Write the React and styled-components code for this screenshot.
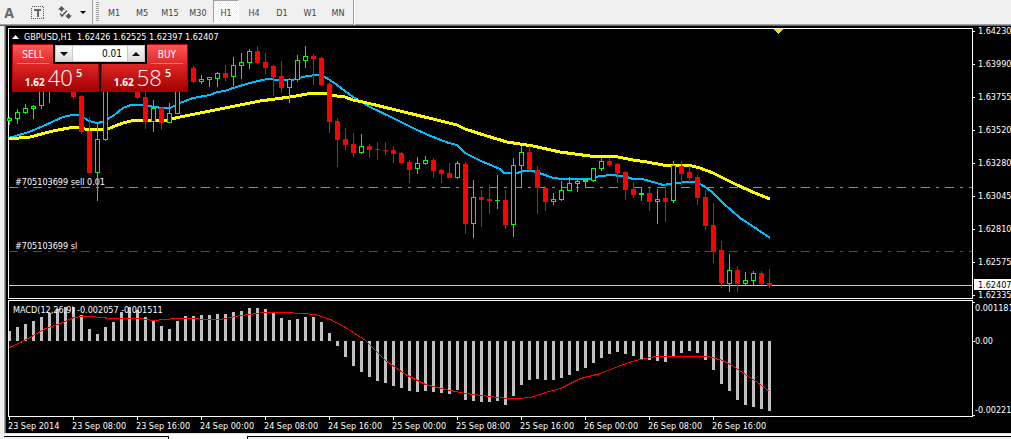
import React, { useState } from "react";
import styled, { createGlobalStyle, css } from "styled-components";

const GlobalStyle = createGlobalStyle`
  * {
    box-sizing: border-box;
  }

  body {
    margin: 0;
    background: #f0f0f0;
    font-family: "DejaVu Sans Condensed", "DejaVu Sans", sans-serif;
    font-size: 9px;
    overflow: hidden;
  }

  button,
  input {
    font-family: inherit;
    margin: 0;
    padding: 0;
  }
`;

const Page = styled.div`
  display: flex;
  flex-direction: column;
  min-height: 100vh;
`;

const Toolbar = styled.div`
  display: flex;
  height: 26px;
  background: #f0f0f0;
  border-bottom: 1px solid #696969;
  box-shadow: inset 0 -1px 0 #a0a0a0;
`;

const DrawTools = styled.div`
  display: flex;
  align-items: center;
  width: 93px;
  border-right: 1px solid #a0a0a0;
`;

const ToolButton = styled.button`
  display: flex;
  align-items: center;
  justify-content: center;
  width: ${({ $width }) => $width}px;
  height: 24px;
  border: none;
  background: none;
  color: #6b6b6b;
  font-size: 14px;
  font-weight: bold;
`;

const Grip = styled.span`
  width: 3px;
  height: 19px;
  margin: 2px 2px 0 3px;
  background: repeating-linear-gradient(#a0a0a0 0 1px, #f0f0f0 1px 2px);
`;

const Periods = styled.div`
  display: flex;
  gap: 2px;
  padding-right: 2px;
  border-right: 1px solid #a0a0a0;
  box-shadow: 1px 0 0 #ffffff;
`;

const PeriodButton = styled.button`
  width: 26px;
  height: 23px;
  padding-top: 2px;
  border: 1px solid transparent;
  background: none;
  color: #444444;
  font-size: 9px;

  ${({ $active }) =>
    $active &&
    css`
      border-color: #a0a0a0 #ffffff #ffffff #a0a0a0;
      background: repeating-conic-gradient(#ffffff 0 25%, #f0f0f0 0 50%) 0 0 /
        2px 2px;
    `}
`;

const Workspace = styled.div`
  display: grid;
  grid-template-columns: 1fr 38px;
  row-gap: 1px;
  margin-left: 4px;
  padding: 2px 0 0 3px;
  border-left: 1px solid #a0a0a0;
  box-shadow: inset 1px 0 0 #696969;
  background: #000000;
`;

const Pane = styled.div`
  position: relative;
  border: 1px solid #ffffff;
`;

const Drawing = styled.svg`
  display: block;
  width: 100%;
  height: ${({ $height }) => $height}px;
  overflow: ${({ $spill }) => ($spill ? "visible" : "hidden")};

  text {
    fill: #ffffff;
    font-size: 9px;
  }

  text.current {
    fill: #000000;
  }
`;

const Title = styled.div`
  position: absolute;
  top: 2px;
  left: 3px;
  display: flex;
  align-items: center;
  gap: 5px;
  color: #ffffff;
  line-height: 12px;
  white-space: pre;
`;

const TradePanel = styled.div`
  position: absolute;
  top: 15px;
  left: 3px;
  display: grid;
  grid-template-columns: 87px 87px;
  gap: 2px;
  background: #000000;
`;

const TradeButton = styled.button`
  display: flex;
  flex-direction: column;
  align-items: ${({ $side }) => ($side === "buy" ? "flex-end" : "flex-start")};
  height: 48px;
  border: 1px solid #b00000;
  background: linear-gradient(#ff5656, #dc2424 45%, #a40000);
  color: #ffffff;
`;

const TradeLabel = styled.span`
  width: 32px;
  height: 19px;
  margin: 0 4px;
  border-bottom: 1px solid #f08080;
  font-size: 10px;
  line-height: 19px;
  text-align: center;
`;

const Quote = styled.span`
  display: flex;
  align-items: baseline;
  align-self: center;
  gap: 3px;
  height: 26px;
  padding-right: 4px;
  font-family: "Open Sans", sans-serif;
  line-height: 26px;
`;

const QuoteBase = styled.span`
  font-size: 10px;
  font-weight: bold;
`;

const QuotePips = styled.span`
  font-size: 22px;
  font-weight: 300;
`;

const QuotePoint = styled.sup`
  align-self: flex-start;
  font-size: 11px;
  font-weight: 600;
  line-height: 18px;
`;

const Volume = styled.div`
  position: absolute;
  top: 0;
  left: 41px;
  display: flex;
  width: 94px;
  height: 20px;
  padding: 1px 2px 2px;
  background: #000000;
`;

const StepButton = styled.button`
  display: flex;
  align-items: center;
  justify-content: center;
  width: 18px;
  border: 1px solid #c8c8c8;
  background: linear-gradient(#f8f8f8, #dcdcdc);
`;

const VolumeInput = styled.input`
  flex: 1;
  min-width: 0;
  padding-right: 5px;
  border: 1px solid #c8c8c8;
  border-width: 1px 0;
  border-radius: 0;
  background: #ffffff;
  color: #000000;
  font-size: 10px;
  text-align: right;
`;

const TimeAxis = styled.div`
  grid-column: 1 / -1;
  display: flex;
  height: 16px;
  margin-top: -1px;
  color: #ffffff;
  line-height: 18px;
`;

const TimeLabel = styled.span`
  flex: none;
  width: 64px;
  white-space: nowrap;
  background: linear-gradient(#ffffff, #ffffff) 1px 0 / 1px 3px no-repeat;
`;

const TabBar = styled.div`
  display: flex;
  flex: 1;
  min-height: 6px;
  margin-left: 4px;
  padding-top: 3px;
  background: linear-gradient(#e3e3e3 0 1px, #ffffff 1px 3px, #f0f0f0 3px);
`;

const TabEdge = styled.span`
  flex: ${({ $grow }) => ($grow ? 1 : "none")};
  width: 165px;
  border: 1px solid #000000;
  border-width: ${({ $grow }) => ($grow ? "1px 0 0 1px" : "1px 1px 0 0")};
`;

const ActiveTab = styled.span`
  width: 78px;
  background: #ffffff;
`;

const PERIODS = ["M1", "M5", "M15", "M30", "H1", "H4", "D1", "W1", "MN"];

const DATES = [
  "23 Sep 2014",
  "23 Sep 08:00",
  "23 Sep 16:00",
  "24 Sep 00:00",
  "24 Sep 08:00",
  "24 Sep 16:00",
  "25 Sep 00:00",
  "25 Sep 08:00",
  "25 Sep 16:00",
  "26 Sep 00:00",
  "26 Sep 08:00",
  "26 Sep 16:00",
];

const PRICES = [
  "1.64230",
  "1.63990",
  "1.63755",
  "1.63520",
  "1.63280",
  "1.63045",
  "1.62810",
  "1.62575",
  "1.62335",
];

// direction, high, body top, body bottom, low
const CANDLES = [
  ["u", 117, 118, 121, 125],
  ["u", 109, 112, 119, 124],
  ["u", 104, 108, 113, 114],
  ["u", 105, 106, 109, 119],
  ["u", 80, 84, 106, 109],
  ["u", 76, 78, 86, 103],
  ["u", 70, 72, 80, 84],
  ["u", 66, 68, 76, 84],
  ["d", 64, 68, 97, 99],
  ["d", 95, 96, 132, 134],
  ["d", 117, 131, 173, 173],
  ["u", 122, 139, 173, 201],
  ["u", 70, 80, 140, 141],
  ["u", 66, 70, 82, 88],
  ["u", 60, 66, 74, 84],
  ["d", 60, 66, 84, 88],
  ["d", 80, 84, 98, 99],
  ["d", 90, 97, 122, 129],
  ["u", 100, 108, 122, 132],
  ["d", 107, 108, 123, 130],
  ["u", 103, 113, 123, 123],
  ["u", 76, 80, 114, 114],
  ["u", 66, 70, 82, 86],
  ["d", 66, 68, 82, 83],
  ["u", 75, 79, 82, 84],
  ["u", 77, 77, 80, 87],
  ["u", 72, 73, 79, 87],
  ["d", 65, 73, 78, 81],
  ["u", 57, 65, 77, 86],
  ["u", 53, 62, 66, 79],
  ["u", 49, 51, 63, 69],
  ["d", 46, 51, 63, 64],
  ["d", 53, 62, 68, 74],
  ["d", 65, 66, 77, 96],
  ["d", 61, 76, 88, 93],
  ["u", 78, 79, 88, 103],
  ["u", 55, 60, 80, 82],
  ["u", 46, 56, 61, 68],
  ["d", 54, 56, 59, 85],
  ["d", 57, 58, 85, 86],
  ["d", 82, 84, 122, 133],
  ["d", 118, 121, 140, 167],
  ["d", 128, 139, 145, 150],
  ["d", 133, 144, 153, 157],
  ["u", 134, 146, 153, 154],
  ["d", 144, 146, 150, 158],
  ["d", 142, 149, 150, 160],
  ["d", 142, 150, 151, 155],
  ["d", 146, 150, 154, 163],
  ["d", 152, 153, 163, 164],
  ["d", 160, 162, 170, 183],
  ["u", 157, 163, 169, 174],
  ["u", 156, 160, 164, 165],
  ["d", 158, 160, 171, 178],
  ["d", 169, 170, 174, 183],
  ["d", 163, 173, 178, 178],
  ["u", 161, 163, 178, 179],
  ["d", 162, 164, 224, 234],
  ["u", 180, 197, 224, 238],
  ["d", 190, 197, 200, 227],
  ["d", 185, 199, 201, 214],
  ["u", 175, 200, 201, 209],
  ["d", 190, 200, 225, 229],
  ["u", 158, 165, 225, 237],
  ["u", 146, 152, 166, 188],
  ["d", 146, 152, 170, 171],
  ["d", 166, 170, 188, 214],
  ["d", 186, 188, 202, 211],
  ["u", 193, 199, 202, 205],
  ["u", 181, 190, 200, 201],
  ["u", 177, 183, 191, 191],
  ["u", 180, 181, 184, 192],
  ["u", 179, 180, 182, 188],
  ["u", 168, 168, 181, 182],
  ["u", 158, 161, 169, 171],
  ["d", 158, 161, 165, 167],
  ["d", 163, 164, 173, 183],
  ["d", 171, 172, 190, 200],
  ["d", 182, 189, 195, 198],
  ["u", 188, 193, 195, 201],
  ["d", 188, 193, 202, 211],
  ["u", 189, 199, 202, 224],
  ["d", 184, 198, 202, 222],
  ["u", 161, 165, 201, 203],
  ["d", 161, 166, 174, 185],
  ["d", 166, 172, 178, 182],
  ["d", 175, 177, 198, 205],
  ["d", 190, 197, 226, 230],
  ["d", 203, 225, 252, 263],
  ["d", 241, 250, 283, 288],
  ["u", 254, 270, 284, 292],
  ["d", 266, 270, 284, 292],
  ["u", 272, 280, 284, 285],
  ["u", 271, 273, 281, 285],
  ["d", 271, 273, 284, 285],
  ["d", 269, 283, 286, 288],
];

const MACD = [
  331, 327, 324, 321, 317, 313, 309, 307, 307, 315, 329, 334, 327, 322, 312,
  307, 310, 317, 321, 326, 329, 321, 316, 316, 315, 315, 314, 314, 312, 311,
  308, 308, 309, 313, 318, 320, 319, 317, 317, 322, 333, 346, 357, 366, 372,
  377, 381, 383, 386, 388, 391, 392, 391, 392, 393, 394, 390, 400, 401, 402,
  402, 401, 405, 396, 385, 380, 379, 380, 380, 378, 375, 371, 368, 363, 358,
  354, 352, 354, 356, 359, 360, 361, 362, 356, 353, 351, 353, 360, 370, 384,
  391, 400, 405, 407, 409, 411,
];
const MACD_ZERO = 341;

const FAST_MA =
  "9,138 29,132 43,126 63,117 72,115 79,115 89,121 97,123 102,122 113,116 123,108 131,105 141,105 155,107 162,108 170,108 180,103 193,98 210,95 217,92 225,91 233,88 250,83 267,79 280,80 292,80 307,76 318,75 327,78 337,85 353,97 370,107 393,118 417,130 433,137 449,143 457,145 465,153 481,161 500,169 504,173 517,173 523,171 533,171 545,175 553,178 563,179 590,179 600,176 613,175 627,177 633,179 642,179 653,182 663,185 670,184 677,183 685,182 693,182 700,184 707,188 713,193 723,203 740,218 757,229 770,238";

const SLOW_MA =
  "9,139 30,137 53,131 74,127 85,129 97,130 110,128 123,123 135,120 150,120 167,120 180,117 200,113 220,109 240,105 260,101 290,97 313,93 323,93 337,96 345,97 353,100 363,102 400,111 437,120 457,125 465,129 487,136 507,142 533,146 560,152 590,156 613,156 633,160 647,162 663,165 692,166 700,168 713,173 737,185 755,193 770,199";

const SIGNAL =
  "9,347 20,342 33,335 45,328 60,323 73,317 82,316 90,316 110,318 140,318 153,320 175,318 195,318 202,319 220,319 240,315 257,313 262,312 285,312 302,313 315,314 330,319 345,327 365,340 385,360 405,374 425,384 445,389 465,393 497,397 509,398 517,398 530,397 545,392 560,388 580,378 600,373 620,365 635,360 655,356 708,356 722,360 730,364 745,374 757,382 769,391";

const barX = (index) => 9 + index * 8;

function Candle({ index, candle }) {
  const [direction, high, top, bottom, low] = candle;
  const x = barX(index);
  const color = direction === "u" ? "#00ff00" : "#ff0000";
  const hollow = direction === "u" && bottom - top > 2;

  return (
    <g fill={color}>
      <rect x={x} y={high} width="1" height={low - high} />
      <rect x={x - 2} y={top} width="5" height={bottom - top} />
      {hollow && (
        <rect
          x={x - 1}
          y={top + 1}
          width="3"
          height={bottom - top - 2}
          fill="#000000"
        />
      )}
    </g>
  );
}

// y is counted from the top of the pane
function OrderLine({ y, color, label }) {
  return (
    <>
      <line
        x1="0"
        x2="100%"
        y1={y + 0.5}
        y2={y + 0.5}
        stroke={color}
        strokeDasharray="9 6 3 6"
        shapeRendering="crispEdges"
      />
      <text x="6" y={y - 2}>
        {label}
      </text>
    </>
  );
}

function PriceChart() {
  return (
    <Drawing $height={269} $spill role="img" aria-label="GBPUSD hourly chart">
      <OrderLine y={158} color="#32cd32" label="#705103699 sell 0.01" />
      <OrderLine y={222} color="#ff0000" label="#705103699 sl" />
      <rect y="256" width="100%" height="1" fill="#ffd700" />
      <g transform="translate(-9 -29)" shapeRendering="crispEdges">
        <polyline
          points={FAST_MA}
          fill="none"
          stroke="#00bfff"
          strokeWidth="2"
        />
        <polyline
          points={SLOW_MA}
          fill="none"
          stroke="#ffff00"
          strokeWidth="3"
        />
        {CANDLES.map((candle, index) => (
          <Candle key={index} index={index} candle={candle} />
        ))}
        <path d="M773 29h10l-5 5z" fill="#ffd700" />
      </g>
    </Drawing>
  );
}

function PriceAxis() {
  return (
    <Drawing $height={271} $spill>
      <g transform="translate(-973 -28)">
        {PRICES.map((price, index) => (
          <g key={price}>
            <rect x="973" y={31 + index * 33} width="2" height="1" fill="#fff" />
            <text x="978" y={34 + index * 33}>
              {price}
            </text>
          </g>
        ))}
        <rect x="974" y="279" width="37" height="11" fill="#ffffff" />
        <text className="current" x="978" y="288">
          1.62407
        </text>
      </g>
    </Drawing>
  );
}

function MacdChart() {
  return (
    <Drawing $height={115} role="img" aria-label="MACD">
      <g transform="translate(-9 -301)" shapeRendering="crispEdges">
        {MACD.map((value, index) => (
          <rect
            key={index}
            x={barX(index) - 1}
            y={Math.min(value, MACD_ZERO)}
            width="3"
            height={Math.abs(value - MACD_ZERO)}
            fill="#c0c0c0"
          />
        ))}
        <polyline
          points={SIGNAL}
          transform="translate(0.5 0.5)"
          fill="none"
          stroke="#ff0000"
        />
        <text x="13" y="313">
          MACD(12,26,9) -0.002057 -0.001511
        </text>
      </g>
    </Drawing>
  );
}

function MacdAxis() {
  return (
    <Drawing $height={117} $spill>
      <g transform="translate(-973 -300)">
        <path d="M973 302.5h2M973 341.5h2M973 415.5h2" stroke="#ffffff" />
        <text x="975" y="311">
          0.001181
        </text>
        <text x="975" y="344">
          0.00
        </text>
        <text x="975" y="413">
          -0.00221
        </text>
      </g>
    </Drawing>
  );
}

function TradeSide({ side, label, base, pips, point }) {
  return (
    <TradeButton type="button" $side={side}>
      <TradeLabel>{label}</TradeLabel>
      <Quote>
        <QuoteBase>{base}</QuoteBase>
        <QuotePips>{pips}</QuotePips>
        <QuotePoint>{point}</QuotePoint>
      </Quote>
    </TradeButton>
  );
}

function OneClickTrading() {
  const [volume, setVolume] = useState("0.01");

  const step = (amount) => {
    setVolume(Math.max(0.01, Number(volume) + amount).toFixed(2));
  };

  return (
    <TradePanel>
      <TradeSide side="sell" label="SELL" base="1.62" pips="40" point="5" />
      <TradeSide side="buy" label="BUY" base="1.62" pips="58" point="5" />
      <Volume>
        <StepButton
          type="button"
          aria-label="Decrease volume"
          onClick={() => step(-0.01)}
        >
          <svg width="8" height="4">
            <path d="M0 0h8L4 4z" />
          </svg>
        </StepButton>
        <VolumeInput
          aria-label="Volume"
          value={volume}
          onChange={(event) => setVolume(event.target.value)}
        />
        <StepButton
          type="button"
          aria-label="Increase volume"
          onClick={() => step(0.01)}
        >
          <svg width="8" height="4">
            <path d="M0 4h8L4 0z" />
          </svg>
        </StepButton>
      </Volume>
    </TradePanel>
  );
}

export default function App() {
  const [period, setPeriod] = useState("H1");

  return (
    <Page>
      <GlobalStyle />
      <Toolbar>
        <DrawTools>
          <ToolButton type="button" $width={18}>
            A
          </ToolButton>
          <ToolButton type="button" $width={38} aria-label="Text label">
            <svg width="13" height="13" shapeRendering="crispEdges">
              <rect
                x="0.5"
                y="0.5"
                width="12"
                height="12"
                fill="none"
                stroke="#555"
                strokeDasharray="1 1"
              />
              <path d="M3 3h7v2H7.500v6h-2V5H3z" fill="#666" />
            </svg>
          </ToolButton>
          <ToolButton type="button" $width={18} aria-label="Arrows">
            <svg width="14" height="13" fill="#555">
              <path d="M3.500 0L7 3.500H5.500L3.500 6 1.500 3.500H0z" />
              <path d="M10.500 13L14 9.500H12.500L10.500 7 8.500 9.500H7z" />
              <path
                d="M2 7.500l2 2.500 5-5.500"
                fill="none"
                stroke="#555"
                strokeWidth="1.500"
              />
            </svg>
          </ToolButton>
          <ToolButton type="button" $width={18} aria-label="More arrows">
            <svg width="6" height="3">
              <path d="M0 0h6L3 3z" />
            </svg>
          </ToolButton>
        </DrawTools>
        <Grip />
        <Periods>
          {PERIODS.map((name) => (
            <PeriodButton
              key={name}
              type="button"
              $active={name === period}
              onClick={() => setPeriod(name)}
            >
              {name}
            </PeriodButton>
          ))}
        </Periods>
      </Toolbar>
      <Workspace>
        <Pane>
          <PriceChart />
          <Title>
            <svg width="7" height="4">
              <path d="M0 4h7L3.500 0z" fill="#ffffff" />
            </svg>
            {"GBPUSD,H1  1.62426 1.62525 1.62397 1.62407"}
          </Title>
          <OneClickTrading />
        </Pane>
        <PriceAxis />
        <Pane>
          <MacdChart />
        </Pane>
        <MacdAxis />
        <TimeAxis>
          {DATES.map((date) => (
            <TimeLabel key={date}>{date}</TimeLabel>
          ))}
        </TimeAxis>
      </Workspace>
      <TabBar>
        <TabEdge />
        <ActiveTab />
        <TabEdge $grow />
      </TabBar>
    </Page>
  );
}
